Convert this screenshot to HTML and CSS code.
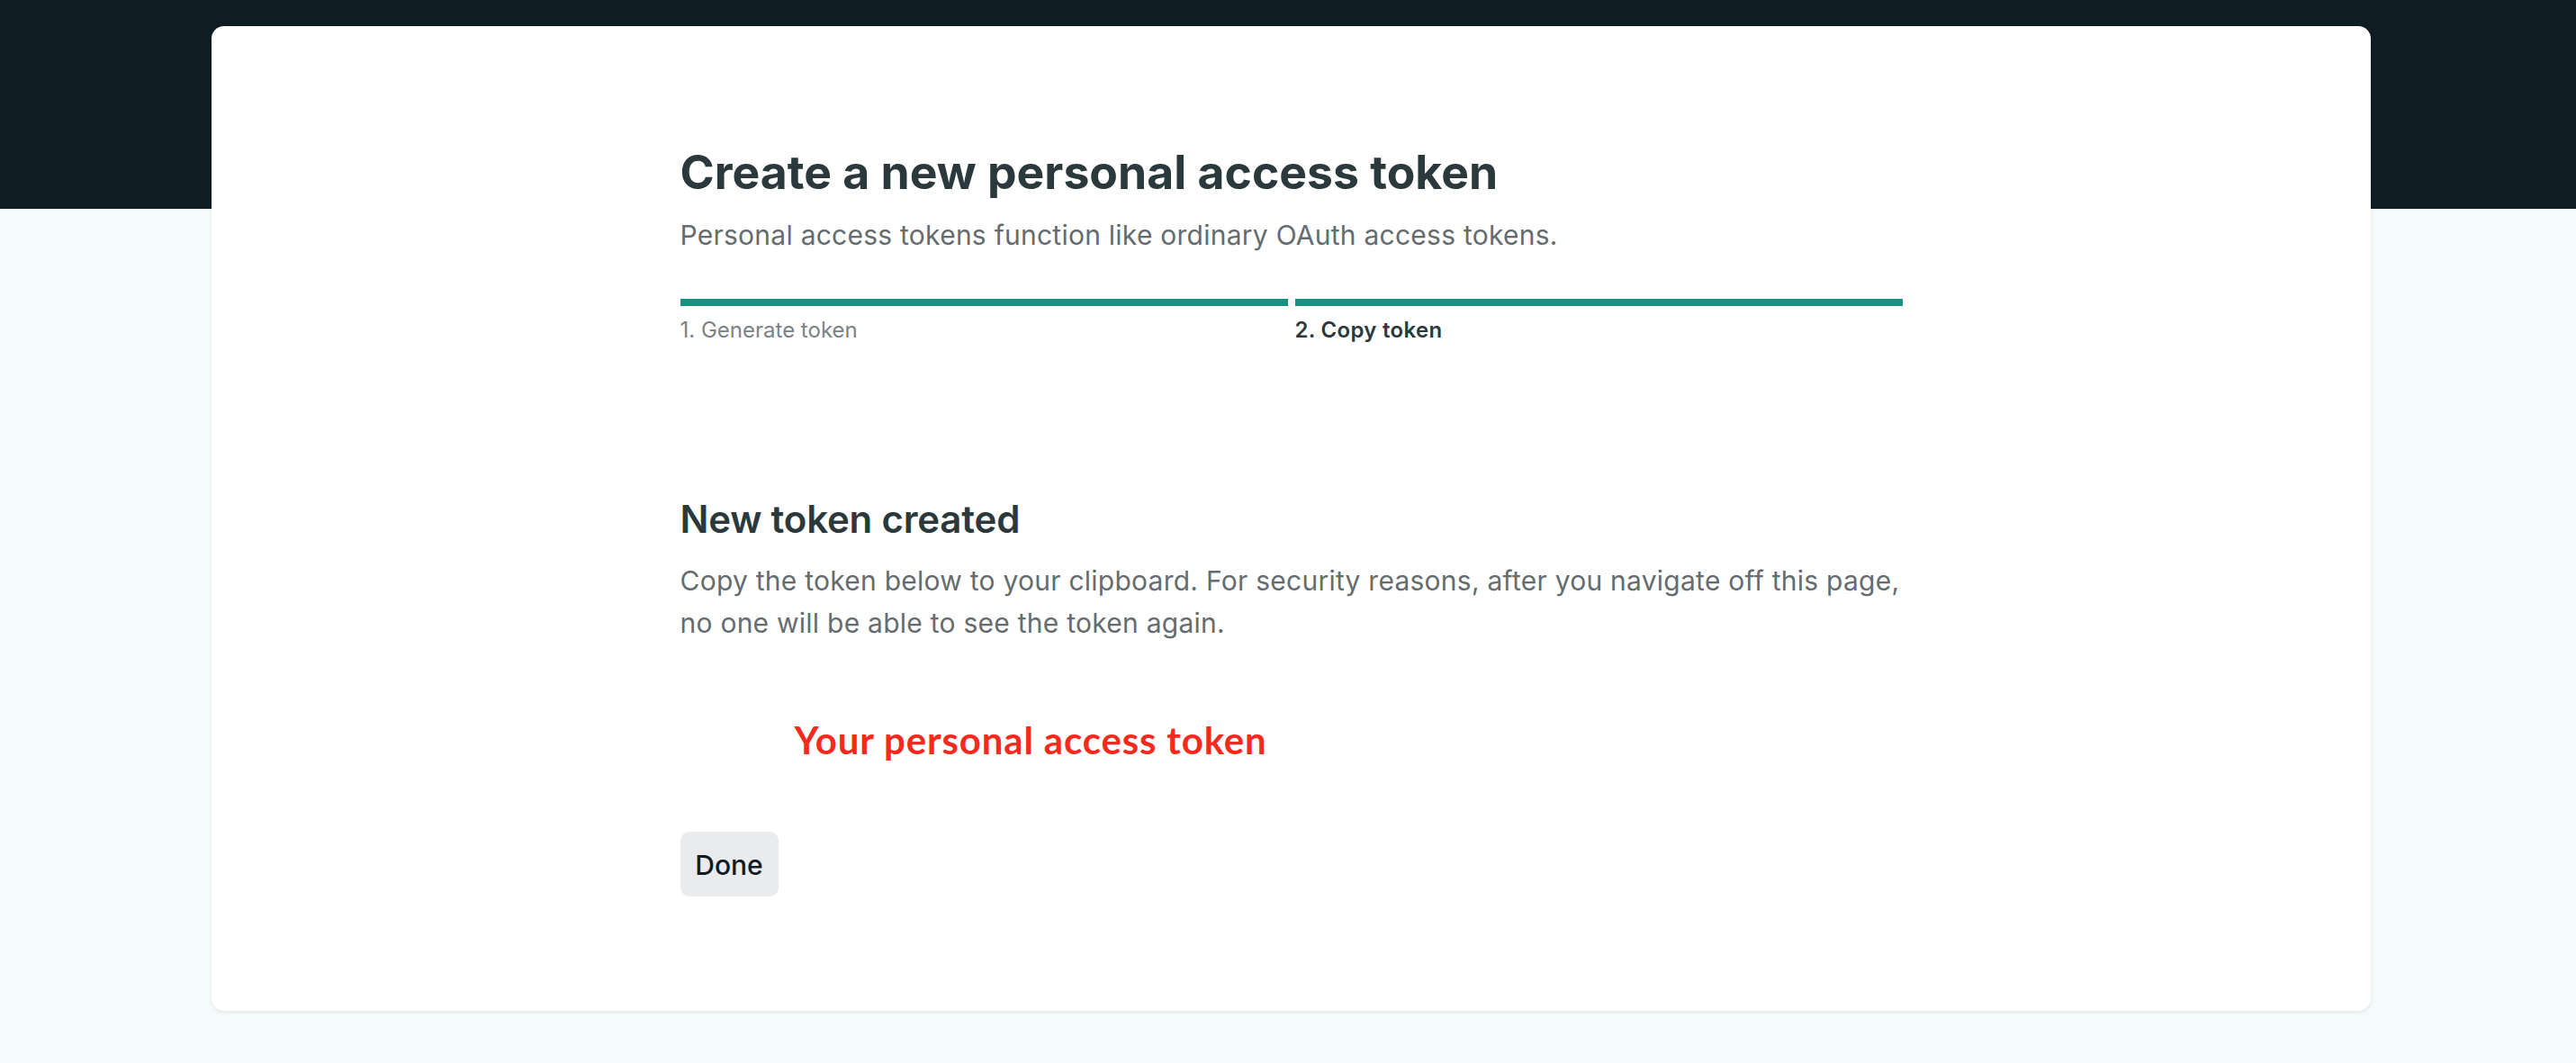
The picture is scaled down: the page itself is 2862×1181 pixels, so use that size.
FILE: index.html
```html
<!DOCTYPE html>
<html lang="en">
<head>
<meta charset="utf-8">
<title>Create a new personal access token</title>
<link rel="stylesheet" href="styles.css">
</head>
<body>
<main class="card">
  <div class="content">
    <h1 class="title">Create a new personal access token</h1>
    <p class="subtitle">Personal access tokens function like ordinary OAuth access tokens.</p>
    <ol class="steps">
      <li class="step step-done">1. Generate token</li>
      <li class="step step-current">2. Copy token</li>
    </ol>
    <h2 class="section-title">New token created</h2>
    <p class="section-text">Copy the token below to your clipboard. For security reasons, after you navigate off this page, no one will be able to see the token again.</p>
    <div class="token">Your personal access token</div>
    <button class="btn" type="button">Done</button>
  </div>
</main>
</body>
</html>
```

FILE: styles.css
```css
html, body {
  margin: 0;
  padding: 0;
}

body {
  box-sizing: border-box;
  min-height: 1181px;
  padding-left: 7px;
  background: linear-gradient(to bottom, #0f1c23 0, #0f1c23 232px, #f6fbfb 232px);
  font-family: "Inter", "Liberation Sans", sans-serif;
  overflow: hidden;
}

.card {
  box-sizing: border-box;
  width: 2399px;
  margin: 29px auto 0;
  padding: 132px 0 127px;
  background: #ffffff;
  border-radius: 14px;
  box-shadow: 0 2px 5px rgba(0, 0, 0, 0.09);
}

.content {
  width: 1358px;
  margin: 0 auto;
}

.title {
  margin: 0;
  font-size: 51.7px;
  line-height: 60px;
  font-weight: 700;
  color: #2b393c;
  letter-spacing: 0;
}

.subtitle {
  margin: 20px 0 0;
  font-size: 30px;
  line-height: 40px;
  font-weight: 400;
  color: #656c6f;
  letter-spacing: 0.25px;
}

.steps {
  list-style: none;
  margin: 51px 0 0;
  padding: 0;
  display: grid;
  grid-template-columns: 1fr 1fr;
  column-gap: 8px;
}

.step {
  border-top: 8px solid #1a9080;
  padding-top: 11px;
  font-size: 24px;
  line-height: 32px;
}

.step-done {
  color: #7b8285;
  font-weight: 400;
}

.step-current {
  color: #2b393c;
  font-weight: 600;
  letter-spacing: 0.3px;
}

.section-title {
  margin: 168px 0 0;
  font-size: 42px;
  line-height: 52px;
  font-weight: 600;
  color: #2b393c;
  letter-spacing: -0.2px;
}

.section-text {
  margin: 19px 0 0;
  font-size: 30px;
  line-height: 47px;
  color: #656c6f;
  letter-spacing: 0.25px;
}

.token {
  margin: 81px 0 0;
  padding-left: 127px;
  font-family: "Lato", "Noto Sans", sans-serif;
  font-weight: 700;
  font-size: 42px;
  line-height: 50px;
  color: #f42a1e;
  letter-spacing: 0.85px;
}

.btn {
  display: block;
  margin: 77px 0 0;
  width: 109px;
  height: 72px;
  padding: 2px 0 0;
  border: 0;
  border-radius: 10px;
  background: #e9ebec;
  color: #111a1f;
  font-family: "Inter", "Liberation Sans", sans-serif;
  font-size: 30px;
  font-weight: 500;
  line-height: 70px;
  text-align: center;
}
```
